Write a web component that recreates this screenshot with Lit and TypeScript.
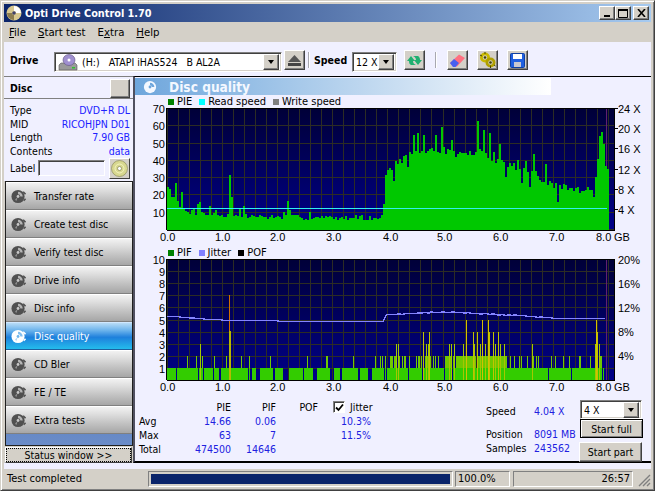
import { LitElement, html, css, svg } from "lit";
import { customElement } from "lit/decorators.js";

function rng(seed: number) {
  let s = seed;
  return () => {
    s = (s * 1664525 + 1013904223) >>> 0;
    return s / 4294967296;
  };
}
const X0 = 32;
const PX = 55.1;
const gx = (g: number) => X0 + g * PX;

function interp(t: number[][], g: number) {
  for (let i = 1; i < t.length; i++) {
    if (g <= t[i][0]) {
      const [a, b] = t[i - 1];
      const [c, d] = t[i];
      return b + ((d - b) * (g - a)) / (c - a);
    }
  }
  return t[t.length - 1][1];
}

const pieEnv = [
  [0, 22], [0.1, 20], [0.2, 14], [0.3, 11], [0.5, 10], [1, 8.5], [2, 7.5], [3, 7], [3.93, 7],
  [3.95, 33], [4.05, 36], [4.3, 42], [4.6, 46], [5, 46], [5.3, 44], [5.7, 45], [6, 40],
  [6.5, 35], [6.8, 28], [7, 26], [7.5, 23], [7.7, 25], [7.76, 30], [7.86, 59], [7.91, 52], [7.95, 36], [8, 30],
];
const pieSpikes: Record<number, number> = {
  0: 25, 2: 24, 8: 27, 14: 22, 30: 15, 32: 16, 42: 14, 62: 32, 64: 19, 76: 14, 120: 17, 216: 15,
  246: 55, 250: 56, 256: 55, 268: 55, 274: 60, 284: 52, 310: 63, 316: 58, 322: 56, 332: 50, 366: 44, 378: 38,
};

function piePath() {
  const r = rng(7);
  let d = "M32 122";
  for (let i = 0; i < 441; i += 2) {
    const g = i / 55.1;
    const e = interp(pieEnv, g);
    let v = e + (r() - 0.5) * (g > 3.95 ? 4 : 3);
    const q = r();
    if (q > 0.94) v += g > 3.95 ? 5 : 3;
    else if (q < 0.06 && g > 3.95) v -= 8;
    const k = pieSpikes[i] ?? 0;
    if (k) v = k;
    const y = Math.round(122 - v * 1.725);
    d += `V${y}h2`;
  }
  return d + "V122Z";
}

const onRuns = [
  [0, 8], [10, 19], [21, 30], [32, 35], [37, 45], [47, 51], [54, 80], [85, 88], [93, 105], [108, 115], [122, 135], [137, 145],
  [150, 154], [155, 162], [167, 172], [175, 190], [193, 200], [205, 215],
];
const lvlPaths = (() => {
  const r = rng(21);
  const colors: Record<number, string> = { 1: "", 2: "", 3: "", 4: "", 5: "" };
  const special: [number, number][] = [
    [0.6, 3], [4.15, 3], [4.2, 3], [4.64, 4], [4.7, 3], [4.74, 3], [4.76, 4], [5.12, 3], [5.16, 3], [5.2, 3],
    [5.42, 5], [5.38, 3], [5.55, 4], [5.58, 3], [5.62, 4], [5.68, 3], [5.72, 5], [5.78, 3], [5.82, 5], [5.84, 4],
    [5.92, 4], [5.96, 3], [6.0, 4], [6.04, 3], [6.12, 3], [6.62, 3], [7.78, 5], [7.8, 4], [7.76, 3], [7.84, 3], [7.94, 3],
  ];
  const sp = new Map<number, number>();
  for (const [g, h] of special) sp.set(Math.round(g * 55.1), h);
  for (let i = 0; i < 437; i += 1) {
    const g = i / 55.1;
    let h = 0;
    if (i <= 215) h = onRuns.some(([a, b]) => i >= a && i <= b) ? 1 : 0;
    else h = r() < 0.91 ? 1 : 0;
    const p2 =
      g < 1 ? 0.1 : g < 3.9 ? 0.06 : g > 5.05 && g < 6.15 ? 0.92 : g < 5.05 ? 0.42 : g > 7.75 ? 0.5 : 0.22;
    const two = r() < p2;
    if (sp.has(i)) h = sp.get(i)!;
    else if (two) h = 2;
    if (h > 0) {
      const top = Math.round(121 - h * 12.1);
      const bot = h === 2 ? 109 : 121;
      colors[h] += `M${X0 + i} ${bot}V${top}h1V${bot}Z`;
      if (h === 2) colors[1] += `M${X0 + i} 121V109h1V121Z`;
    }
  }
  return colors;
})();

const jitterEnv = [
  [0, 56.5], [0.5, 59], [1, 60.5], [2, 61.5], [3.93, 61.5], [3.97, 55.5], [5, 52.5], [5.5, 53.5], [6, 55], [6.7, 57], [7, 58.5], [7.97, 59.5],
];
function jitterPath() {
  const r = rng(3);
  let d = "";
  for (let i = 0; i <= 438; i += 2) {
    const g = i / 55.1;
    let y = interp(jitterEnv, g);
    if ((g < 0.5 || (g > 4 && g < 6.8)) && r() > 0.5) y += r() * 1.4 - 0.7;
    d += `${i ? "L" : "M"}${X0 + i} ${Math.round(y) + 0.5}`;
  }
  return d;
}

function grid(h: number, step: number) {
  let d = "";
  for (let x = 0; x <= 40; x++) d += `M${Math.round(X0 + x * 11.02) + 0.5} 0V${h}`;
  for (let y = step; y < h - 1; y += step) d += `M${X0} ${Math.round(y) + 0.5}H${X0 + 447}`;
  return d;
}

const discIcon = (c: string, hole: string) => html`<svg class="nav-ic" width="15" height="15" viewBox="0 0 16 16">
  <circle cx="7.5" cy="8" r="7" fill="${c}"></circle>
  <path d="M7.5 3A5 5 0 0 1 12.5 8H10A2.5 2.5 0 0 0 7.5 5.5Z" fill="${hole}" opacity=".85"></path>
  <path d="M4.5 11L7 9 5.5 13Z" fill="${hole}" opacity=".6"></path>
  <circle cx="7.5" cy="8" r="1.5" fill="${hole}"></circle>
  <path d="M13 3L15.5 5.5M13.5 12.5L15.5 10.5" stroke="${c}" stroke-width="1.6"></path>
</svg>`;

const NAV = ["Transfer rate", "Create test disc", "Verify test disc", "Drive info", "Disc info", "Disc quality", "CD Bler", "FE / TE", "Extra tests"];
const XLAB = [25, 80, 135, 191, 248, 302, 358, 414, 461];

@customElement("app-root")
export class AppRoot extends LitElement {
  static styles = css`
    :host { display: block; width: 655px; height: 491px; overflow: hidden; }
    * { box-sizing: border-box; }
    .win {
      width: 655px; height: 491px; background: #d4d0c8; padding: 3px;
      border: 1px solid; border-color: #d4d0c8 #404040 #404040 #d4d0c8;
      box-shadow: inset 1px 1px #fff, inset -1px -1px #808080;
      display: flex; flex-direction: column;
      font: 10.5px "DejaVu Sans Condensed", "Liberation Sans", sans-serif; color: #000;
    }
    .title {
      height: 18px; flex: none; display: flex; align-items: center; padding: 0 2px; gap: 3px;
      background: linear-gradient(90deg, #0a246a, #a6caf0);
      color: #fff; font-weight: bold; font-size: 10.8px;
    }
    .title .txt { flex: 1; }
    .wbtns { display: flex; }
    .wbtn {
      width: 16px; height: 14px; display: flex; align-items: center; justify-content: center;
      background: #d4d0c8; border: 1px solid; border-color: #fff #404040 #404040 #fff; box-shadow: inset -1px -1px #808080;
    }
    .wbtns .wbtn:last-child { margin-left: 2px; }
    .menu { height: 20px; flex: none; display: flex; align-items: center; padding-left: 5px; gap: 12px; font-size: 11.3px; }
    .menu u { text-decoration: underline; }
    .toolbar {
      height: 34px; flex: none; background: #f0f0ff; display: flex; align-items: center; padding: 6px 0 0 6px;
    }
    .lbl-b { font-weight: bold; margin-top: -4px; }
    .combo {
      height: 20px; border: 1px solid; border-color: #808080 #fff #fff #808080; box-shadow: inset 1px 1px #404040, inset -1px -1px #d4d0c8;
      background: #fff; display: flex; align-items: center; padding: 2px; font-size: 10.5px;
    }
    .combo .v { flex: 1; display: flex; align-items: center; gap: 4px; white-space: pre; padding-left: 1px; }
    .arrow {
      width: 16px; height: 16px; flex: none; background: #d4d0c8; border: 1px solid; border-color: #fff #404040 #404040 #fff;
      box-shadow: inset -1px -1px #808080; display: flex; align-items: center; justify-content: center;
    }
    .arrow::after { content: ""; border: 3.5px solid transparent; border-top: 4px solid #000; border-bottom: 0; }
    .tb {
      width: 21px; height: 20px; flex: none; background: #d4d0c8; display: flex; align-items: center; justify-content: center;
      border: 1px solid; border-color: #fff #404040 #404040 #fff; box-shadow: inset -1px -1px #808080; margin-top: -4px;
    }
    .sep { width: 2px; height: 16px; flex: none; background: #a8a8b0; border-right: 1px solid #fff; margin-top: -4px; }
    .main { flex: 1; display: flex; min-height: 0; background: #f0f0ff; }
    .left { width: 129px; flex: none; display: flex; flex-direction: column; background: #d4d0c8; margin-bottom: 6px; }
    .dh {
      height: 23px; flex: none; background: #f0f0ff; border-top: 1px solid #808080; border-bottom: 1px solid #808080;
      display: flex; align-items: center; justify-content: space-between; padding: 0 3px 0 6px; font-weight: bold;
    }
    .dbtn { width: 20px; height: 19px; margin-top: 1px; background: #d4d0c8; border: 1px solid; border-color: #fff #404040 #404040 #fff; box-shadow: inset -1px -1px #808080; }
    .info { height: 82px; flex: none; background: #f0f0ff; padding: 4px 3px 0 6px; display: flex; flex-direction: column; }
    .row { height: 13.7px; flex: none; display: flex; justify-content: space-between; align-items: center; }
    .row b { font-weight: normal; color: #2020ff; }
    .lab { display: flex; align-items: center; }
    .lab span { width: 28px; flex: none; }
    .lab i {
      width: 67px; height: 16px; flex: none; background: #f0f0ff; border: 1px solid; border-color: #808080 #fff #fff #808080; box-shadow: inset 1px 1px #404040;
    }
    .lab .cd { width: 21px; height: 21px; flex: none; margin-left: 4px; background: #d4d0c8; border: 1px solid; border-color: #fff #404040 #404040 #fff; display: flex; align-items: center; justify-content: center; }
    .nav { margin-left: 1px; border: 1px solid #202020; flex: none; display: flex; flex-direction: column; background: linear-gradient(#1c4c94, #6a8cc8); height: 265px; }
    .n {
      height: 28px; flex: none; display: flex; align-items: center; padding-left: 5px; gap: 8px; font-size: 10.5px;
      background: linear-gradient(#f2f2f2 0%, #dcdcdc 30%, #c4c4c4 60%, #a6a6a6 100%);
      border-top: 1px solid #fff; border-bottom: 1px solid #808080;
    }
    .n.on {
      background: linear-gradient(#b8dcf6 0%, #6db4ec 28%, #1e80dc 55%, #24bcec 100%); color: #fff; border-color: #d0e8ff #1e60a0 #1e60a0;
    }
    .status-w { flex: 1; padding: 1px 1px 0 1px; }
    .status-b {
      height: 16px; display: flex; align-items: center; justify-content: center; background: #d4d0c8; font-size: 10.5px;
      border: 1px solid; border-color: #fff #404040 #404040 #fff; outline: 1px dotted #000; outline-offset: -2px;
    }
    .right { flex: 1; min-width: 0; background: #f0f0ff; border-top: 1px solid #000; border-left: 2px solid #505060; border-bottom: 2px solid #000; padding-top: 1px; margin-bottom: 6px; display: flex; flex-direction: column; }
    .band {
      height: 17px; width: 416px; flex: none; background: linear-gradient(90deg, #6ea6dc, #fff);
      display: flex; align-items: center; padding-left: 8px; gap: 12px; font-weight: bold; font-size: 13.6px; color: #f4f8ff;
    }
    .band svg { flex: none; }
    .legend { height: 13px; flex: none; padding-left: 33px; display: flex; align-items: center; gap: 3px; font-size: 11px; color: #000; }
    .legend s { width: 6px; height: 6px; flex: none; margin-left: 4px; }
    .legend s:first-child { margin-left: 0; }
    .c { display: block; overflow: visible; flex: none; }
    .c text { font: 11px "Liberation Sans", sans-serif; fill: #000; }
    .gap2 { height: 1px; flex: none; }
    .bottom { flex: 1; display: flex; min-height: 0; padding: 5px 0 0 4px; }
    .stats { display: grid; grid-template-columns: 47px 45px 45px 44px 51px; grid-auto-rows: 14px; align-items: center; }
    .stats .r { text-align: right; }
    .stats .blue { color: #2020e0; }
    .chk { display: flex; align-items: center; gap: 5px; padding-left: 14px; margin-left: -1px; white-space: nowrap; }
    .chk i { width: 12px; height: 12px; flex: none; background: #fff; border: 1px solid; border-color: #808080 #fff #fff #808080; box-shadow: inset 1px 1px #404040; display: flex; align-items: center; justify-content: center; }
    .side { margin-left: auto; display: flex; width: 157px; margin-right: 8px; }
    .side-l { display: flex; flex-direction: column; width: 93px; padding-top: 4px; }
    .side-l div { display: grid; grid-template-columns: 48px 1fr; height: 14px; flex: none; align-items: center; }
    .side-l div span + span { color: #2020e0; }
    .side-l .spc { height: 9px; }
    .side-r { display: flex; flex-direction: column; width: 64px; align-items: flex-end; }
    .combo.s { width: 62px; height: 19px; flex: none; margin-right: 1px; }
    .push { flex: none; background: #d4d0c8; display: flex; align-items: center; justify-content: center; }
    .p1 { width: 63px; border: 1px solid #000; box-shadow: inset 1px 1px #fff, inset -1px -1px #808080; height: 19px; }
    .p2 { width: 63px; margin-top: 4px; margin-right: 1px; border: 1px solid; border-color: #fff #404040 #404040 #fff; box-shadow: inset -1px -1px #808080; height: 20px; }
    .sbar { height: 18px; flex: none; display: flex; align-items: center; padding-top: 1px; font-size: 11px; position: relative; }
    .cell { height: 16px; display: flex; align-items: center; border: 1px solid; border-color: #808080 #fff #fff #808080; padding: 0 2px; flex: none; }
    .c0 { width: 144px; border-color: transparent; }
    .c1 { width: 305px; padding: 2px; }
    .c1 i { display: block; width: 301px; height: 100%; background: #0a246a; }
    .c2 { width: 55px; margin-left: 2px; }
    .c3 { width: 120px; margin-left: 3px; justify-content: flex-end; }
    .grip { position: absolute; right: 0; bottom: 0; }
  `;

  render() {
    const dY = [70, 60, 50, 40, 30, 20, 10];
    const xs = [0, 1, 2, 3, 4, 5, 6, 7, 8];
    const grid1 = grid(122, 17.25);
    const grid2 = grid(121, 12.1);
    return html`<div class="win">
      <div class="title">
        <svg width="16" height="16" viewBox="0 0 16 16"><circle cx="8" cy="8" r="7.5" fill="#d8c890"></circle><path d="M8 1A7 7 0 0 1 15 8H10A2 2 0 0 0 8 6Z" fill="#fff"></path><path d="M8 15A7 7 0 0 1 1 8H6A2 2 0 0 0 8 10Z" fill="#8c7c50"></path><circle cx="8" cy="8" r="1.8" fill="#40406a"></circle></svg>
        <span class="txt">Opti Drive Control 1.70</span>
        <div class="wbtns">
          <div class="wbtn"><svg width="8" height="8"><rect x="1" y="6" width="6" height="2"></rect></svg></div>
          <div class="wbtn"><svg width="10" height="9"><path d="M.5 1.5h9v7h-9z" fill="none" stroke="#000"></path><rect width="10" height="2"></rect></svg></div>
          <div class="wbtn"><svg width="9" height="8"><path d="M1 0L8 8M8 0L1 8" stroke="#000" stroke-width="1.6"></path></svg></div>
        </div>
      </div>
      <div class="menu">
        <span><u>F</u>ile</span><span><u>S</u>tart test</span><span>E<u>x</u>tra</span><span><u>H</u>elp</span>
      </div>
      <div class="toolbar">
        <span class="lbl-b" style="width:44px">Drive</span>
        <div class="combo" style="width:228px">
          <span class="v">
            <svg width="20" height="17" viewBox="0 0 20 17"><path d="M1 11l2-2h14l2 2v5H1z" fill="#9a9a9a" stroke="#555" stroke-width=".6"></path><ellipse cx="11" cy="6" rx="6" ry="5.5" fill="#a090d0" stroke="#605080" stroke-width=".6"></ellipse><circle cx="11" cy="6" r="1.5" fill="#fff"></circle><rect x="14" y="13" width="3" height="1.5" fill="#30c030"></rect></svg>
            <span>(H:)   ATAPI iHAS524   B AL2A</span>
          </span>
          <div class="arrow"></div>
        </div>
        <div class="tb" style="margin-left:2px"><svg width="15" height="13" viewBox="0 0 15 13"><path d="M7.5 1L14 8H1z" fill="#555"></path><rect x="1" y="9" width="13" height="3" fill="#444"></rect></svg></div>
        <div class="sep" style="margin-left:3px"></div>
        <span class="lbl-b" style="margin-left:4px;width:38px">Speed</span>
        <div class="combo" style="width:45px"><span class="v">12 X</span><div class="arrow"></div></div>
        <div class="tb" style="margin-left:7px"><svg width="17" height="15" viewBox="0 0 17 15"><path d="M1 8l4-5 4 5H7c0 2 1 3 3 4H5C3.500 11 3 10 3 8z" fill="#20b070"></path><path d="M16 7l-4 5-4-5h2c0-2-1-3-3-4h5c1.500 1 2 2 2 4z" fill="#20b070"></path></svg></div>
        <div class="sep" style="margin-left:10px"></div>
        <div class="tb" style="margin-left:10px"><svg width="17" height="15" viewBox="0 0 17 15"><path d="M1 10L10 1.500l6 3.500-8 8.500H4z" fill="#ff7080"></path><path d="M1 10l4-4 5 4-3.500 4H4z" fill="#4860f0"></path></svg></div>
        <div class="tb" style="margin-left:9px"><svg width="17" height="16" viewBox="0 0 17 16"><circle cx="6" cy="5.500" r="3.600" fill="none" stroke="#c8b800" stroke-width="2.800"></circle><circle cx="11.500" cy="10.500" r="3.600" fill="none" stroke="#b0a000" stroke-width="2.800"></circle><path d="M6 0v2M1 3l2 1M11.500 13.500v2.500M15 13l1.500 1" stroke="#404000"></path><circle cx="6" cy="5.500" r="1.300" fill="#404000"></circle><circle cx="11.500" cy="10.500" r="1.300" fill="#404000"></circle></svg></div>
        <div class="tb" style="margin-left:9px"><svg width="15" height="15" viewBox="0 0 15 15"><rect x=".5" y=".5" width="14" height="14" rx="1" fill="#2060e0" stroke="#1040a0"></rect><rect x="3" y="1" width="9" height="5" fill="#fff"></rect><rect x="4" y="9" width="7" height="5" fill="#c8c8d0"></rect></svg></div>
      </div>
      <div class="main">
        <div class="left">
          <div class="dh"><span>Disc</span><div class="dbtn"></div></div>
          <div class="info">
            <div class="row"><span>Type</span><b>DVD+R DL</b></div>
            <div class="row"><span>MID</span><b>RICOHJPN D01</b></div>
            <div class="row"><span>Length</span><b>7.90 GB</b></div>
            <div class="row"><span>Contents</span><b>data</b></div>
            <div class="lab"><span>Label</span><i></i><div class="cd"><svg width="17" height="17" viewBox="0 0 17 17"><circle cx="8.500" cy="8.500" r="8" fill="#d8d890" stroke="#808050" stroke-width=".6"></circle><circle cx="8.500" cy="8.500" r="4.500" fill="none" stroke="#f4f4c0"></circle><circle cx="8.500" cy="8.500" r="2" fill="#fff" stroke="#707040" stroke-width=".6"></circle></svg></div></div>
          </div>
          <div class="nav">
            ${NAV.map(
              (t) => html`<div class="n ${t === "Disc quality" ? "on" : ""}">
                ${t === "Disc quality" ? discIcon("#fff", "#6db4ec") : discIcon("#505050", "#c8c8c8")}<span>${t}</span>
              </div>`
            )}
          </div>
          <div class="status-w"><div class="status-b">Status window &gt;&gt;</div></div>
        </div>
        <div class="right">
          <div class="band">
            <svg width="14" height="14" viewBox="0 0 16 16"><circle cx="8" cy="8" r="7" fill="#f4f8ff"></circle><path d="M8 3A5 5 0 0 1 13 8H10A2 2 0 0 0 8 6Z" fill="#6ea6dc"></path><circle cx="8" cy="8" r="1.600" fill="#6ea6dc"></circle></svg>
            <span>Disc quality</span>
          </div>
          <div class="legend">
            <s style="background:#008000"></s><span>PIE</span>
            <s style="background:#00ffff"></s><span>Read speed</span>
            <s style="background:#808080"></s><span>Write speed</span>
          </div>
          <svg class="c" width="514" height="137" viewBox="0 0 514 137" shape-rendering="crispEdges">
            <defs><linearGradient id="bg" x1="0" y1="0" x2="0" y2="1"><stop offset="0" stop-color="#000038"></stop><stop offset="1" stop-color="#000088"></stop></linearGradient></defs>
            <rect x="${X0}" y="0" width="447" height="122" fill="url(#bg)"></rect>
            <path d="${grid1}" stroke="#2c2c24" fill="none"></path>
            <path d="M${gx(8) - 1} 0V122" stroke="#602070"></path>
            <path d="${piePath()}" fill="#00c800"></path>
            <path d="M${X0} 100.5H${gx(7.98)}" stroke="#30f0f0"></path>
            <path d="M${X0 - 0.5} 122V0.5H${X0 + 447.5}M${X0 - 0.5} 122.5H${X0 + 447.5}" stroke="#000" fill="none"></path>
            <path d="M${X0 + 447.5} 0V122" stroke="#000"></path>
            ${dY.map((v, i) => svg`<text x="${X0 - 2}" y="${i * 17.25 + 5}" text-anchor="end">${v}</text>`)}
            ${[24, 20, 16, 12, 8, 4].map((v, i) => svg`<path d="M${X0 + 447} ${Math.round(i * 20.2) + 0.5}h4" stroke="#000"></path><text x="${X0 + 451}" y="${i * 20.2 + 5}">${v} X</text>`)}
            ${xs.map((v, i) => svg`<text x="${XLAB[i]}" y="133">${v.toFixed(1)}</text>`)}
            <text x="479" y="133">GB</text>
          </svg>
          <div class="gap2"></div>
          <div class="legend">
            <s style="background:#008000"></s><span>PIF</span>
            <s style="background:#8080ff"></s><span>Jitter</span>
            <s style="background:#000"></s><span>POF</span>
          </div>
          <svg class="c" width="514" height="136" viewBox="0 0 514 136" shape-rendering="crispEdges">
            <rect x="${X0}" y="0" width="447" height="121" fill="url(#bg)"></rect>
            <path d="${grid2}" stroke="#2c2c24" fill="none"></path>
            <path d="M${gx(8) - 1} 0V121" stroke="#602070"></path>
            <path d="${lvlPaths[1]}" fill="#33cc00"></path>
            <path d="${lvlPaths[2]}" fill="#70c800"></path>
            <path d="${lvlPaths[3]}" fill="#a4c800"></path>
            <path d="${lvlPaths[4]}" fill="#c0c400"></path>
            <path d="${lvlPaths[5]}" fill="#d4c000"></path>
            <path d="M94 121V36h1V121Z" fill="#d07000"></path>
            <path d="M94 121V72h2V121Z" fill="#b8b800"></path>
            <path d="${jitterPath()}" fill="none" stroke="#8484ff" stroke-width="1.4"></path>
            <path d="M${X0 - 0.5} 121V0.5H${X0 + 447.5}V121M${X0 - 0.5} 121.5H${X0 + 447.5}" stroke="#000" fill="none"></path>
            ${[10, 9, 8, 7, 6, 5, 4, 3, 2, 1].map((v, i) => svg`<text x="${X0 - 2}" y="${i * 12.1 + 5}" text-anchor="end">${v}</text>`)}
            ${["20%", "16%", "12%", "8%", "4%"].map((v, i) => svg`<text x="${X0 + 451}" y="${i * 24.1 + 5}">${v}</text>`)}
            ${xs.map((v, i) => svg`<text x="${XLAB[i]}" y="132">${v.toFixed(1)}</text>`)}
            <text x="479" y="132">GB</text>
          </svg>
          <div class="bottom">
            <div class="stats">
              <span></span><span class="r">PIE</span><span class="r">PIF</span><span class="r" style="padding-right:2px">POF</span>
              <span class="chk"><i><svg width="9" height="9" viewBox="0 0 9 9"><path d="M1 4.500L3.500 7 8 1.500" fill="none" stroke="#000" stroke-width="1.800"></path></svg></i>Jitter</span>
              <span>Avg</span><span class="r blue">14.66</span><span class="r blue">0.06</span><span></span><span class="r blue">10.3%</span>
              <span>Max</span><span class="r blue">63</span><span class="r blue">7</span><span></span><span class="r blue">11.5%</span>
              <span>Total</span><span class="r blue">474500</span><span class="r blue">14646</span><span></span><span></span>
            </div>
            <div class="side">
              <div class="side-l">
                <div><span>Speed</span><span>4.04 X</span></div>
                <div class="spc"></div>
                <div><span>Position</span><span>8091 MB</span></div>
                <div><span>Samples</span><span>243562</span></div>
              </div>
              <div class="side-r">
                <div class="combo s"><span class="v">4 X</span><div class="arrow"></div></div>
                <div class="push p1">Start full</div>
                <div class="push p2">Start part</div>
              </div>
            </div>
          </div>
        </div>
      </div>
      <div class="sbar">
        <div class="cell c0">Test completed</div>
        <div class="cell c1"><i></i></div>
        <div class="cell c2">100.0%</div>
        <div class="cell c3">26:57</div>
        <svg class="grip" width="14" height="14" viewBox="0 0 14 14"><path d="M13 2L2 13M13 6L6 13M13 10L10 13" stroke="#808080" stroke-width="1.4"></path></svg>
      </div>
    </div>`;
  }
}
